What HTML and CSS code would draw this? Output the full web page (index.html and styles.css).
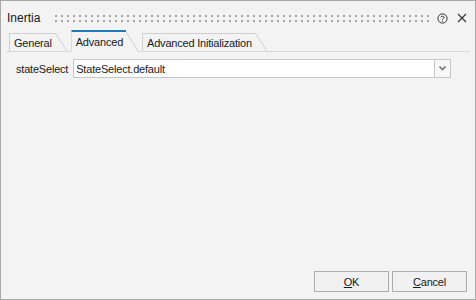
FILE: index.html
```html
<!DOCTYPE html>
<html lang="en">
<head>
  <meta charset="UTF-8" />
  <title>Inertia</title>
  <link rel="stylesheet" href="styles.css">
</head>
<body>

  <div class="window">
    <div class="titlebar">
      <span class="title">Inertia</span>
      <div class="grip"></div>
      <svg class="icon" width="11" height="11" viewBox="0 0 11 11">
        <circle cx="5.5" cy="5.5" r="4.6" fill="none" stroke="#333" stroke-width="1"/>
        <path d="M3.9 4.4 C3.9 2.8 7.1 2.8 7.1 4.4 C7.1 5.5 5.5 5.4 5.5 6.6" fill="none" stroke="#333" stroke-width="1"/>
        <rect x="5" y="7.6" width="1" height="1" fill="#333"/>
      </svg>
      <svg class="icon close" width="10" height="10" viewBox="0 0 10 10">
        <path d="M1 1 L9 9 M9 1 L1 9" stroke="#333" stroke-width="1.1"/>
      </svg>
    </div>

    <div class="tabs">
      <div class="tab">
        <span class="tab-label">General</span>
        <svg class="slant" width="12" height="18" viewBox="0 0 12 18"><path d="M0 0.5 L0.5 0.5 L12 18" fill="none" stroke="#cfcfcf"/></svg>
      </div>
      <div class="tab active">
        <span class="tab-label">Advanced</span>
        <svg class="slant" width="12" height="21" viewBox="0 0 12 21"><path d="M0 2 L12 21" fill="none" stroke="#cfcfcf"/></svg>
      </div>
      <div class="tab">
        <span class="tab-label">Advanced Initialization</span>
        <svg class="slant" width="12" height="18" viewBox="0 0 12 18"><path d="M0 0.5 L0.5 0.5 L12 18" fill="none" stroke="#cfcfcf"/></svg>
      </div>
    </div>

    <div class="panel">
      <div class="field">
        <label class="field-label">stateSelect</label>
        <div class="combo">
          <span class="combo-value">StateSelect.default</span>
          <span class="combo-button">
            <svg width="7" height="5" viewBox="0 0 7 5"><path d="M0.5 0.5 L3.5 3.5 L6.5 0.5" fill="none" stroke="#7a7a7a" stroke-width="1.6"/></svg>
          </span>
        </div>
      </div>
    </div>

    <div class="footer">
      <button class="btn"><u>O</u>K</button>
      <button class="btn"><u>C</u>ancel</button>
    </div>
  </div>

</body>
</html>
```

FILE: styles.css
```css
body {
  margin: 0;
  font-family: "Liberation Sans", Arial, sans-serif;
  font-size: 11px;
  letter-spacing: -0.2px;
  color: #1a1a1a;
}
.window {
  width: 476px;
  height: 300px;
  box-sizing: border-box;
  border: 1px solid #a9a9a9;
  background: #f3f3f3;
  display: flex;
  flex-direction: column;
}
.titlebar {
  height: 30px;
  box-sizing: border-box;
  padding: 4px 8px 0 6px;
  display: flex;
  align-items: center;
}
.title {
  font-size: 12px;
  letter-spacing: 0;
}
.grip {
  flex: 1;
  height: 7px;
  margin: 1px 8px 0 15px;
  background:
    linear-gradient(to right, #a3a3a3 2px, transparent 2px) 0 0 / 6px 2px repeat-x,
    linear-gradient(to right, #a3a3a3 2px, transparent 2px) 0 5px / 6px 2px repeat-x;
}
.icon {
  display: block;
}
.close {
  margin-left: 9px;
}
.tabs {
  height: 21px;
  box-sizing: border-box;
  margin: 0 5px;
  padding-left: 3px;
  border-bottom: 1px solid #d9d9d9;
  display: flex;
  align-items: flex-end;
  gap: 4px;
}
.tab {
  display: flex;
  height: 18px;
  margin-bottom: -1px;
  border-bottom: 1px solid #d9d9d9;
}
.tab-label {
  display: flex;
  align-items: center;
  padding: 0 3px 0 4px;
  border-left: 1px solid #cfcfcf;
  border-top: 1px solid #cfcfcf;
}
.slant {
  display: block;
}
.tab.active {
  height: 21px;
  border-bottom: 1px solid #f3f3f3;
}
.tab.active .tab-label {
  border-top: 2px solid #1b7ab8;
  border-left-color: #dadada;
  padding-top: 1px;
}
.panel {
  flex: 1;
  padding: 7px 24px 0 15px;
}
.field {
  display: flex;
  align-items: center;
  gap: 5px;
}
.combo {
  flex: 1;
  display: flex;
  height: 19px;
  box-sizing: border-box;
  border: 1px solid #c6c6c6;
  background: #fff;
}
.combo-value {
  flex: 1;
  display: flex;
  align-items: center;
  padding-left: 2px;
}
.combo-button {
  width: 15px;
  border-left: 1px solid #c6c6c6;
  background: #f7f7f7;
  display: flex;
  align-items: center;
  justify-content: center;
}
.footer {
  display: flex;
  justify-content: flex-end;
  gap: 3px;
  padding: 0 8px 7px 0;
}
.btn {
  width: 75px;
  height: 21px;
  font-family: inherit;
  font-size: 11px;
  letter-spacing: -0.2px;
  color: #1a1a1a;
  background: #f1f1f1;
  border: 1px solid #adadad;
  border-radius: 0;
  padding: 0;
}
```
